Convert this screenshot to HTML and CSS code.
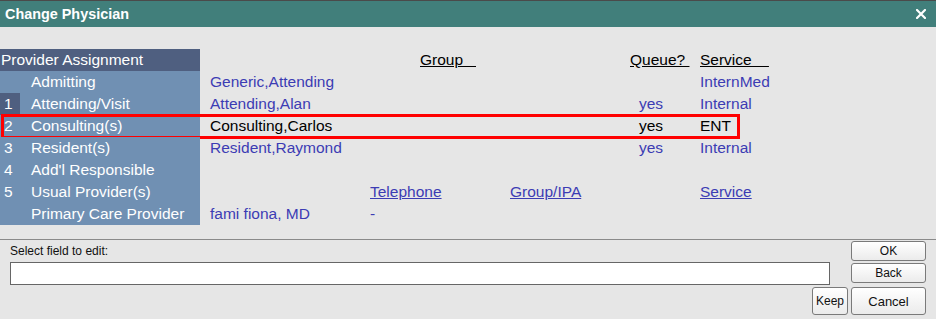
FILE: index.html
```html
<!DOCTYPE html>
<html>
<head>
<meta charset="utf-8">
<title>Change Physician</title>
<link rel="stylesheet" href="styles.css">
</head>
<body>
<div class="dialog">
  <div class="titlebar">
    <span class="title">Change Physician</span>
    <svg class="close" width="10" height="10" viewBox="0 0 10 10"><path d="M1 1L9 9M9 1L1 9" stroke="#fff" stroke-width="2.2" stroke-linecap="square"/></svg>
  </div>
  <div class="table">
    <div class="r">
      <div class="c head">Provider Assignment</div>
      <div class="c"></div><div class="c"></div>
      <div class="c hd grp">Group&nbsp;&nbsp;&nbsp;</div>
      <div class="c"></div>
      <div class="c hd">Queue?&nbsp;</div>
      <div class="c hd">Service&nbsp;&nbsp;&nbsp;&nbsp;</div>
    </div>
    <div class="r">
      <div class="c num"></div><div class="c lab">Admitting</div><div class="c"></div>
      <div class="c v">Generic,Attending</div><div class="c"></div><div class="c"></div><div class="c"></div>
      <div class="c v">InternMed</div>
    </div>
    <div class="r">
      <div class="c num dark">1</div><div class="c lab">Attending/Visit</div><div class="c"></div>
      <div class="c v">Attending,Alan</div><div class="c"></div><div class="c"></div><div class="c v q">yes</div>
      <div class="c v">Internal</div>
    </div>
    <div class="r sel">
      <div class="c num">2</div><div class="c lab">Consulting(s)</div><div class="c"></div>
      <div class="c v">Consulting,Carlos</div><div class="c"></div><div class="c"></div><div class="c v q">yes</div>
      <div class="c v">ENT</div>
    </div>
    <div class="r">
      <div class="c num">3</div><div class="c lab">Resident(s)</div><div class="c"></div>
      <div class="c v">Resident,Raymond</div><div class="c"></div><div class="c"></div><div class="c v q">yes</div>
      <div class="c v">Internal</div>
    </div>
    <div class="r">
      <div class="c num">4</div><div class="c lab">Add'l Responsible</div>
    </div>
    <div class="r">
      <div class="c num">5</div><div class="c lab">Usual Provider(s)</div><div class="c"></div>
      <div class="c"></div><div class="c v u">Telephone</div><div class="c v u">Group/IPA</div><div class="c"></div>
      <div class="c v u">Service</div>
    </div>
    <div class="r">
      <div class="c num"></div><div class="c lab">Primary Care Provider</div><div class="c"></div>
      <div class="c v">fami fiona, MD</div><div class="c v">-</div>
    </div>
  </div>
  <div class="bottom">
    <div class="label">Select field to edit:</div>
    <button class="btn ok">OK</button>
    <input class="field" type="text">
    <button class="btn back">Back</button>
    <button class="btn keep">Keep</button>
    <button class="btn cancel">Cancel</button>
  </div>
</div>
</body>
</html>
```

FILE: styles.css
```css
html, body {
  margin: 0;
  padding: 0;
  background: #e6e6e6;
}
.dialog {
  width: 936px;
  height: 319px;
  background: #e6e6e6;
  font-family: "Liberation Sans", Arial, sans-serif;
  overflow: hidden;
}
.titlebar {
  height: 26px;
  border-top: 1px solid #4a4a4a;
  background: #417f7b;
  display: flex;
  align-items: center;
  justify-content: space-between;
  padding: 0 10px 0 5px;
}
.title {
  color: #fff;
  font-weight: bold;
  font-size: 14.4px;
}
.close {
  display: block;
  margin-top: -1px;
}
.table {
  margin-top: 22px;
  position: relative;
}
.r {
  display: grid;
  grid-template-columns: 20px 180px 10px 160px 140px 120px 70px 1fr;
  height: 22px;
  font-size: 15.5px;
  line-height: 22px;
  position: relative;
}
.c {
  white-space: nowrap;
}
.head {
  grid-column: span 2;
  background: #4f5f80;
  color: #fff;
  padding-left: 1px;
}
.num {
  background: #7090b3;
  color: #fff;
  padding-left: 4px;
}
.num.dark {
  background: #4f5f80;
}
.lab {
  background: #7090b3;
  color: #fff;
  padding-left: 11px;
}
.hd {
  color: #000;
  text-decoration: underline;
}
.grp {
  padding-left: 50px;
}
.v {
  color: #3c3cb4;
}
.q {
  padding-left: 9px;
}
.u {
  text-decoration: underline;
}
.sel .v {
  color: #000;
}
.sel::after {
  content: "";
  position: absolute;
  left: 1px;
  top: -1px;
  width: 733px;
  height: 19px;
  border: 3px solid #ff0000;
}
.bottom {
  margin-top: 14px;
  border-top: 1px solid #8a8a8a;
  padding: 1px 10px 0 10px;
  display: grid;
  grid-template-columns: 799px 36px 75px;
  grid-template-rows: 20px 22px 28px;
  column-gap: 3px;
  row-gap: 2px;
}
.label {
  grid-column: 1 / 3;
  grid-row: 1;
  align-self: end;
  font-size: 12px;
  line-height: 14px;
  margin-bottom: 3px;
  color: #111;
}
.field {
  grid-column: 1 / 3;
  grid-row: 2;
  width: 820px;
  height: 23px;
  box-sizing: border-box;
  margin: -1px 0 0 0;
  border: 1px solid #666;
  background: #fff;
  padding: 0;
  outline: none;
}
.btn {
  font-family: "Liberation Sans", Arial, sans-serif;
  font-size: 12px;
  color: #111;
  border: 1px solid #7a7a7a;
  border-radius: 3px;
  background: linear-gradient(#ffffff, #ebebeb);
  padding: 0;
  margin: 0;
  box-sizing: border-box;
}
.ok {
  grid-column: 3;
  grid-row: 1;
  height: 20px;
}
.back {
  grid-column: 3;
  grid-row: 2;
  height: 20px;
}
.keep {
  grid-column: 2;
  grid-row: 3;
  width: 36px;
  height: 28px;
  margin-left: 0;
}
.cancel {
  grid-column: 3;
  grid-row: 3;
  height: 28px;
  font-size: 13px;
}
```
